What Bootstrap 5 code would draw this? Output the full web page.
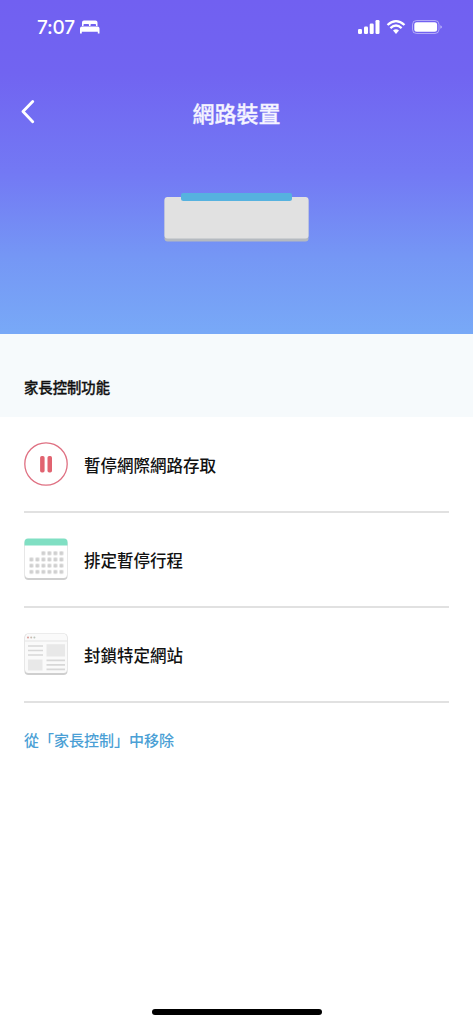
<!DOCTYPE html>
<html lang="zh-Hant">
<head>
<meta charset="utf-8">
<meta name="viewport" content="width=device-width, initial-scale=1">
<title>網路裝置</title>
<link href="https://cdn.jsdelivr.net/npm/bootstrap@5.3.0/dist/css/bootstrap.min.css" rel="stylesheet">
<style>
body{font-family:"Noto Sans CJK TC",sans-serif;color:#111;height:1024px;overflow:hidden}
.hero{height:334px;background:linear-gradient(#7160f1 0,#7164f1 22%,#7379f4 52%,#7597f5 77%,#78a9f7 100%)}
.status{height:54px;padding:0 31px 0 37px}
.clock{font:500 19px/1 Inter,sans-serif;letter-spacing:-.2px}
.titlebar{height:60px;margin-top:29px;padding-left:21px}
.titlebar h1{font-size:22px;font-weight:500;line-height:1;color:#f5f4ff;padding:0 37px 2px 0;-webkit-text-stroke:.3px #f5f4ff}
.device{margin-top:49px}
.section-head{height:83px;background:#f6fafc;padding:44px 24px 0}
.section-head h2{font-size:14.35px;font-weight:500;line-height:18px;-webkit-text-stroke:.3px #111}
.option{height:95px;border-bottom:2px solid #e1e1e1;font-size:16.5px;font-weight:500;line-height:1}
.option:first-child{height:96px}
.option span{padding-top:2px}
.remove{font-size:15px;font-weight:500;line-height:20px;color:#4b9fd5;margin-top:27px;padding-left:24px}
.home{width:170px;height:6px;border-radius:3px;background:#000;margin-bottom:9px}
svg{display:block;flex:none}
</style>
</head>
<body class="d-flex flex-column bg-white">
<header class="hero flex-shrink-0">
  <div class="status d-flex align-items-center justify-content-between text-white">
    <div class="d-flex align-items-center">
      <span class="clock">7:07</span>
      <svg class="ms-1" width="22" height="16" viewBox="0 0 22 16" fill="#fff"><path d="M3 7V3.500Q3 1.500 5 1.500H16.500Q18.500 1.500 18.500 3.500V7H17V5.800Q17 5 16.200 5H12.300Q11.500 5 11.500 5.800V7H10V5.800Q10 5 9.200 5H5.300Q4.500 5 4.500 5.800V7ZM3 7.500H18.500Q20.500 7.700 20.500 9.500V14.500H18.800V12.700H2.800V14.500H1V9.500Q1 7.700 3 7.500Z"/></svg>
    </div>
    <svg width="85" height="18" viewBox="0 0 85 18" fill="#fff">
      <rect x="1" y="11" width="4" height="5" rx="1.200"/><rect x="7" y="8.500" width="4" height="7.500" rx="1.200"/><rect x="12.700" y="5.500" width="4" height="10.500" rx="1.200"/><rect x="18.500" y="2" width="4" height="14" rx="1.200"/>
      <g fill="none" stroke="#fff" stroke-width="2.300"><path d="M30.500 7Q39 -.7 47.500 7"/><path d="M33.400 10.100Q39 5 44.600 10.100"/></g><path d="M36 12.600Q39 10 42 12.600L39 15.900Z"/>
      <rect x="55.500" y="2.500" width="26.500" height="13" rx="4" fill="none" stroke="#fff" stroke-opacity=".45"/><rect x="57.300" y="4.300" width="22.800" height="9.500" rx="2.500"/><path d="M83.300 7.200Q85 8 85 9Q85 10 83.300 10.800Z" opacity=".5"/>
    </svg>
  </div>
  <div class="titlebar d-flex align-items-center">
    <svg width="16" height="26" viewBox="0 0 16 26"><path d="M11.700 1.500L2 11.500L11.700 21.700" fill="none" stroke="#fff" stroke-width="2.800" stroke-linecap="round" stroke-linejoin="round"/></svg>
    <h1 class="flex-grow-1 text-center mb-0">網路裝置</h1>
  </div>
  <svg class="device mx-auto" width="145" height="50" viewBox="0 0 145 50"><rect x=".5" y="6" width="144" height="43.500" rx="3" fill="#b5bac0"/><rect x=".5" y="5" width="144" height="41.500" rx="3" fill="#e1e1e1"/><path d="M17 3Q17 1 19 1H126Q128 1 128 3V6.500Q128 9 125.500 9H19.500Q17 9 17 6.500Z" fill="#56b2df"/></svg>
</header>
<section class="section-head flex-shrink-0"><h2 class="mb-0">家長控制功能</h2></section>
<main class="px-4">
  <div class="option d-flex align-items-center gap-3">
    <svg width="44" height="44" viewBox="0 0 44 44"><circle cx="22" cy="22" r="21.200" fill="#fff" stroke="#df7082" stroke-width="1.300"/><rect x="16.100" y="14" width="4.500" height="16.500" rx="1.700" fill="#e16370"/><rect x="23.500" y="14" width="4.500" height="16.500" rx="1.700" fill="#e16370"/></svg>
    <span>暫停網際網路存取</span>
  </div>
  <div class="option d-flex align-items-center gap-3">
    <svg width="44" height="44" viewBox="0 0 44 44">
      <defs><pattern id="day" x="4.500" y="12.300" width="6" height="6.200" patternUnits="userSpaceOnUse"><rect x="1" y="1" width="3.800" height="3.800" rx=".8" fill="#d0d0d0"/></pattern></defs>
      <rect x=".5" y="1.500" width="43" height="40.500" rx="4" fill="#cfcfcf"/><rect x="1" y="1.500" width="42" height="38.500" rx="3.500" fill="#fff"/><path d="M.5 7.500V4Q.5 .5 4 .5H40Q43.500 .5 43.500 4V7.500Z" fill="#80dfc3"/>
      <path d="M16.500 12.300H40.500V18.500H16.500ZM4.500 18.500H40.500V37.100H4.500Z" fill="url(#day)"/>
    </svg>
    <span>排定暫停行程</span>
  </div>
  <div class="option d-flex align-items-center gap-3">
    <svg width="44" height="44" viewBox="0 .5 44 44">
      <rect x=".5" y="1" width="43" height="41.500" rx="4" fill="#cfcfcf"/><rect x="1" y="1.300" width="42" height="39.200" rx="3.500" fill="#fafafa"/><path d="M1 8.500H43" stroke="#e4e4e4"/>
      <g><circle cx="4" cy="5" r="1" fill="#d99b97"/><circle cx="7.200" cy="5" r="1" fill="#c9bcb0"/><circle cx="10.400" cy="5" r="1" fill="#bcc5bd"/></g>
      <path fill="#e8e8e8" d="M22.500 11.800H41V24H22.500ZM4 27H18.500V38H4Z"/>
      <path fill="none" stroke="#d8d8d8" stroke-width="1.700" d="M4 13.500H19M4 18H19M4 22.500H19M22.500 27.800H41M22.500 32.300H41M22.500 36.800H41"/>
    </svg>
    <span>封鎖特定網站</span>
  </div>
</main>
<div class="remove">從「家長控制」中移除</div>
<footer class="mt-auto d-flex justify-content-center"><div class="home"></div></footer>
<script src="https://cdn.jsdelivr.net/npm/bootstrap@5.3.0/dist/js/bootstrap.bundle.min.js"></script>
</body>
</html>
